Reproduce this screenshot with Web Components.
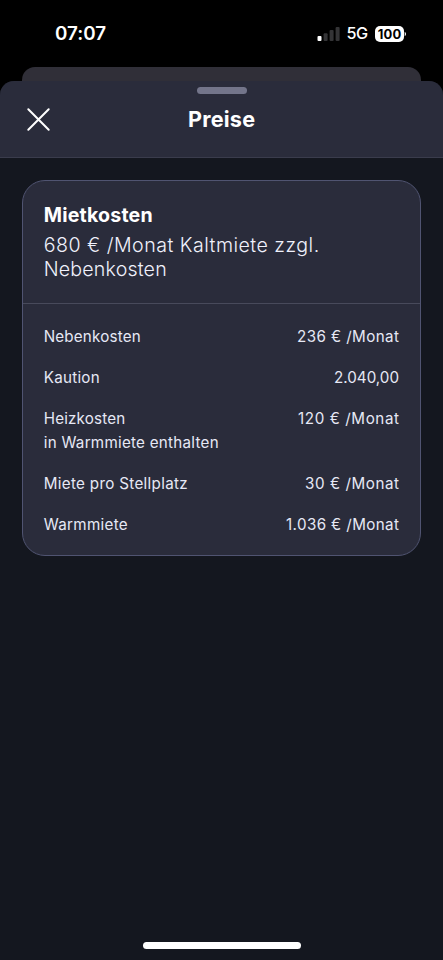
<!DOCTYPE html>
<html lang="de">
<head>
<meta charset="utf-8">
<title>Preise</title>
<style>
html,body{margin:0;height:100%;background:#000;overflow:hidden}
body{font-family:Inter,"Liberation Sans",sans-serif;color:#f0f1fb}
</style>
</head>
<body>
<price-screen></price-screen>
<script>
const define = (name, html, init) => customElements.define(name, class extends HTMLElement {
  connectedCallback() {
    if (this.shadowRoot) return;
    this.attachShadow({ mode: 'open' }).innerHTML = html;
    if (init) init.call(this, this.shadowRoot);
  }
});

/* One line of text whose tracking is adjusted to fill a given width. */
define('fit-text', `<style>:host{display:block;white-space:nowrap}span{display:inline-block}</style><span></span>`, function (root) {
  const span = root.querySelector('span');
  const text = this.getAttribute('text');
  span.textContent = text;
  const target = Number(this.getAttribute('width'));
  const gap = (target - span.getBoundingClientRect().width) / (text.length - 1);
  span.style.letterSpacing = gap.toFixed(3) + 'px';
  span.style.marginRight = (-gap).toFixed(3) + 'px';
});

define('status-bar', `<style>
:host{display:flex;height:66.5px;box-sizing:border-box;padding:22px 37px 0 55px;justify-content:space-between;color:#fff}
.time{font-size:18.8px;font-weight:600;line-height:23px}
.right{display:flex;height:23px;align-items:center}
.net{font-size:16.2px;font-weight:500;line-height:23px;margin:0 7px 0 6.5px}
.battery{display:flex;align-items:center}
.cell{width:29px;height:16px;border-radius:5px;background:#fff;color:#000;font-size:13px;font-weight:700;line-height:16px;display:flex;justify-content:center}
svg{display:block}
</style>
<fit-text class="time" text="07:07" width="51"></fit-text>
<div class="right">
<svg width="23" height="15" viewBox="0 0 23 15"><rect x=".5" y="10" width="4" height="5" rx="1" fill="#fff"/><g fill="#343436"><rect x="6.6" y="7.2" width="4" height="7.8" rx="1"/><rect x="12.6" y="4" width="4" height="11" rx="1"/><rect x="18.6" y="1" width="4" height="14" rx="1"/></g></svg>
<fit-text class="net" text="5G" width="21.5"></fit-text>
<div class="battery"><div class="cell"><fit-text text="100" width="23.5"></fit-text></div>
<svg width="2" height="6"><path d="M.7 .8Q2 1.5 2 3T.7 5.2Z" fill="#fff"/></svg></div>
</div>`);

define('sheet-header', `<style>
:host{display:flex;flex-direction:column;align-items:center;height:77.5px;box-sizing:border-box;padding-top:6.5px;background:#2a2c3b;border-radius:14px 14px 0 0;border-bottom:1px solid #3a3c4c}
.handle{width:50px;height:7px;border-radius:4px;background:#73758a}
.bar{display:grid;grid-template-columns:1fr auto 1fr;align-items:center;width:100%;box-sizing:border-box;padding:0 26px;height:50px}
.title{color:#fff;font-size:21.6px;font-weight:650;line-height:26px}
svg{display:block}
</style>
<div class="handle"></div>
<div class="bar"><svg width="25" height="25" viewBox="0 0 25 25"><path d="M2.3 2.3 22.7 22.7M22.7 2.3 2.3 22.7" stroke="#fff" stroke-width="2" stroke-linecap="round"/></svg>
<fit-text class="title" text="Preise" width="67"></fit-text></div>`);

define('price-row', `<style>
:host{display:flex;justify-content:space-between;font-size:15.2px;line-height:24.5px;color:#e6e8f5}
</style><div class="label"></div><div class="value"></div>`, function (root) {
  const line = (slot, text, width) => {
    const f = document.createElement('fit-text');
    f.setAttribute('text', text);
    f.setAttribute('width', width);
    root.querySelector(slot).append(f);
  };
  const widths = this.getAttribute('lw').split('|');
  this.getAttribute('label').split('|').forEach((t, i) => line('.label', t, widths[i]));
  line('.value', this.getAttribute('value'), this.getAttribute('vw'));
});

define('price-card', `<style>
:host{display:block;box-sizing:border-box;margin:22px 22px 0;height:376px;border:1.5px solid #505471;border-radius:23px;background:#2a2c3b;overflow:hidden}
header{height:123px;box-sizing:border-box;padding:21.5px 20.7px 0;border-bottom:1px solid #484a5b;font-size:19.6px;line-height:24.7px}
.title{font-weight:700;line-height:25px;margin-bottom:5px;color:#fff}
.lead{font-weight:350}
.rows{display:flex;flex-direction:column;gap:16.6px;padding:20.5px 21px 0 20.7px}
</style>
<header><fit-text class="title" text="Mietkosten" width="109"></fit-text>
<fit-text class="lead" text="680 € /Monat Kaltmiete zzgl." width="275.5"></fit-text>
<fit-text class="lead" text="Nebenkosten" width="123"></fit-text></header>
<div class="rows"><slot></slot></div>`);

define('price-screen', `<style>
:host{display:flex;flex-direction:column;height:100vh}
.back{height:27px;margin:0 22px -13px;border-radius:13px 13px 0 0;background:#302f38;flex:none}
.sheet{flex:1;position:relative;background:#14171f;border-radius:14px 14px 0 0;display:flex;flex-direction:column}
.home{width:158px;height:7px;border-radius:4px;background:#fff;margin:auto auto 11px}
</style>
<status-bar></status-bar><div class="back"></div>
<div class="sheet"><sheet-header></sheet-header>
<price-card>
<price-row label="Nebenkosten" lw="97" value="236 € /Monat" vw="102"></price-row>
<price-row label="Kaution" lw="56" value="2.040,00" vw="65"></price-row>
<price-row label="Heizkosten|in Warmmiete enthalten" lw="81.5|175" value="120 € /Monat" vw="101"></price-row>
<price-row label="Miete pro Stellplatz" lw="144" value="30 € /Monat" vw="94"></price-row>
<price-row label="Warmmiete" lw="84" value="1.036 € /Monat" vw="113"></price-row>
</price-card>
<div class="home"></div></div>`);
</script>
</body>
</html>
